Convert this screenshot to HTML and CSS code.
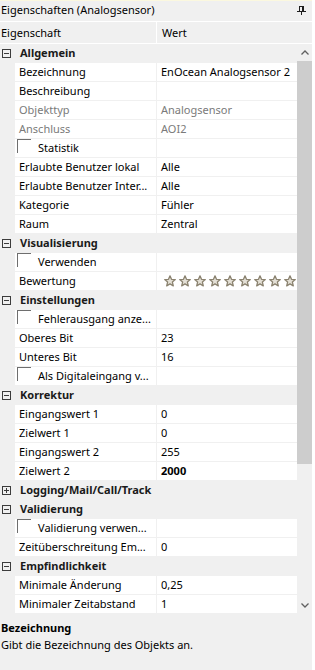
FILE: index.html
```html
<!DOCTYPE html>
<html lang="de">
<head>
<meta charset="utf-8">
<title>Eigenschaften</title>
<link rel="stylesheet" href="styles.css">
</head>
<body>
<div class="panel">
  <div class="titlebar">
    <span class="title">Eigenschaften (Analogsensor)</span>
    <svg class="pin" width="9" height="9" viewBox="0 0 9 9"><rect x="2" y="0" width="5" height="1"/><rect x="2" y="1" width="1" height="4"/><rect x="5" y="1" width="2" height="4"/><rect x="0" y="5" width="9" height="1"/><rect x="4" y="6" width="1" height="3"/></svg>
  </div>
  <div class="header">
    <div class="hname">Eigenschaft</div>
    <div class="hval">Wert</div>
  </div>
  <div class="body">
    <div class="grid">
      <div class="row cat"><span class="exp minus"></span><span class="catlabel">Allgemein</span></div>
      <div class="row"><span class="gutter"></span><span class="name">Bezeichnung</span><span class="val">EnOcean Analogsensor 2</span></div>
      <div class="row"><span class="gutter"></span><span class="name">Beschreibung</span><span class="val"></span></div>
      <div class="row dis"><span class="gutter"></span><span class="name">Objekttyp</span><span class="val">Analogsensor</span></div>
      <div class="row dis"><span class="gutter"></span><span class="name">Anschluss</span><span class="val">AOI2</span></div>
      <div class="row"><span class="gutter"></span><span class="name chk"><span class="box"></span>Statistik</span><span class="val"></span></div>
      <div class="row"><span class="gutter"></span><span class="name">Erlaubte Benutzer lokal</span><span class="val">Alle</span></div>
      <div class="row"><span class="gutter"></span><span class="name">Erlaubte Benutzer Inter...</span><span class="val">Alle</span></div>
      <div class="row"><span class="gutter"></span><span class="name">Kategorie</span><span class="val">Fühler</span></div>
      <div class="row"><span class="gutter"></span><span class="name">Raum</span><span class="val">Zentral</span></div>
      <div class="row cat"><span class="exp minus"></span><span class="catlabel">Visualisierung</span></div>
      <div class="row"><span class="gutter"></span><span class="name chk"><span class="box"></span>Verwenden</span><span class="val"></span></div>
      <div class="row"><span class="gutter"></span><span class="name">Bewertung</span><span class="val stars">
        <svg class="star" viewBox="0 0 12 12"><path d="M6 0.8 7.5 4.3 11.3 4.6 8.4 7.1 9.3 10.9 6 8.9 2.7 10.9 3.6 7.1 0.7 4.6 4.5 4.3Z"/></svg>
        <svg class="star" viewBox="0 0 12 12"><path d="M6 0.8 7.5 4.3 11.3 4.6 8.4 7.1 9.3 10.9 6 8.9 2.7 10.9 3.6 7.1 0.7 4.6 4.5 4.3Z"/></svg>
        <svg class="star" viewBox="0 0 12 12"><path d="M6 0.8 7.5 4.3 11.3 4.6 8.4 7.1 9.3 10.9 6 8.9 2.7 10.9 3.6 7.1 0.7 4.6 4.5 4.3Z"/></svg>
        <svg class="star" viewBox="0 0 12 12"><path d="M6 0.8 7.5 4.3 11.3 4.6 8.4 7.1 9.3 10.9 6 8.9 2.7 10.9 3.6 7.1 0.7 4.6 4.5 4.3Z"/></svg>
        <svg class="star" viewBox="0 0 12 12"><path d="M6 0.8 7.5 4.3 11.3 4.6 8.4 7.1 9.3 10.9 6 8.9 2.7 10.9 3.6 7.1 0.7 4.6 4.5 4.3Z"/></svg>
        <svg class="star" viewBox="0 0 12 12"><path d="M6 0.8 7.5 4.3 11.3 4.6 8.4 7.1 9.3 10.9 6 8.9 2.7 10.9 3.6 7.1 0.7 4.6 4.5 4.3Z"/></svg>
        <svg class="star" viewBox="0 0 12 12"><path d="M6 0.8 7.5 4.3 11.3 4.6 8.4 7.1 9.3 10.9 6 8.9 2.7 10.9 3.6 7.1 0.7 4.6 4.5 4.3Z"/></svg>
        <svg class="star" viewBox="0 0 12 12"><path d="M6 0.8 7.5 4.3 11.3 4.6 8.4 7.1 9.3 10.9 6 8.9 2.7 10.9 3.6 7.1 0.7 4.6 4.5 4.3Z"/></svg>
        <svg class="star" viewBox="0 0 12 12"><path d="M6 0.8 7.5 4.3 11.3 4.6 8.4 7.1 9.3 10.9 6 8.9 2.7 10.9 3.6 7.1 0.7 4.6 4.5 4.3Z"/></svg>
      </span></div>
      <div class="row cat"><span class="exp minus"></span><span class="catlabel">Einstellungen</span></div>
      <div class="row"><span class="gutter"></span><span class="name chk"><span class="box"></span>Fehlerausgang anze...</span><span class="val"></span></div>
      <div class="row"><span class="gutter"></span><span class="name">Oberes Bit</span><span class="val">23</span></div>
      <div class="row"><span class="gutter"></span><span class="name">Unteres Bit</span><span class="val">16</span></div>
      <div class="row"><span class="gutter"></span><span class="name chk"><span class="box"></span>Als Digitaleingang v...</span><span class="val"></span></div>
      <div class="row cat"><span class="exp minus"></span><span class="catlabel">Korrektur</span></div>
      <div class="row"><span class="gutter"></span><span class="name">Eingangswert 1</span><span class="val">0</span></div>
      <div class="row"><span class="gutter"></span><span class="name">Zielwert 1</span><span class="val">0</span></div>
      <div class="row"><span class="gutter"></span><span class="name">Eingangswert 2</span><span class="val">255</span></div>
      <div class="row"><span class="gutter"></span><span class="name">Zielwert 2</span><span class="val bold">2000</span></div>
      <div class="row cat"><span class="exp plus"></span><span class="catlabel">Logging/Mail/Call/Track</span></div>
      <div class="row cat"><span class="exp minus"></span><span class="catlabel">Validierung</span></div>
      <div class="row"><span class="gutter"></span><span class="name chk"><span class="box"></span>Validierung verwen...</span><span class="val"></span></div>
      <div class="row"><span class="gutter"></span><span class="name">Zeitüberschreitung Em...</span><span class="val">0</span></div>
      <div class="row cat"><span class="exp minus"></span><span class="catlabel">Empfindlichkeit</span></div>
      <div class="row"><span class="gutter"></span><span class="name">Minimale Änderung</span><span class="val">0,25</span></div>
      <div class="row"><span class="gutter"></span><span class="name">Minimaler Zeitabstand</span><span class="val">1</span></div>
    </div>
    <div class="scrollbar">
      <div class="arrow up"><svg width="8" height="5" viewBox="0 0 8 5"><path d="M0.5 4.5 4 1 7.5 4.5"/></svg></div>
      <div class="track"><div class="thumb"></div></div>
      <div class="arrow down"><svg width="8" height="5" viewBox="0 0 8 5"><path d="M0.5 0.5 4 4 7.5 0.5"/></svg></div>
    </div>
  </div>
  <div class="desc">
    <div class="desctitle">Bezeichnung</div>
    <div class="desctext">Gibt die Bezeichnung des Objekts an.</div>
  </div>
</div>
</body>
</html>
```

FILE: styles.css
```css
* { box-sizing: border-box; }

html, body {
  margin: 0;
  padding: 0;
  background: #ffffff;
}

body {
  font-family: "Noto Sans", "Open Sans", sans-serif;
  font-size: 11px;
  color: #000;
}

.panel {
  width: 312px;
  height: 670px;
  background: #f0f0f0;
  display: flex;
  flex-direction: column;
  overflow: hidden;
}

.titlebar {
  height: 21px;
  border-top: 1px solid #fbf8df;
  display: flex;
  align-items: center;
  justify-content: space-between;
  padding: 0 6px 2px 1px;
  line-height: 16px;
}

.pin { fill: #1e1e1e; }

.header {
  height: 23px;
  border-top: 1px solid #ffffff;
  border-bottom: 1px solid #ffffff;
  display: flex;
  line-height: 21px;
}

.hname {
  width: 157px;
  border-right: 1px solid #ffffff;
  padding-left: 1px;
}

.hval {
  flex: 1;
  padding-left: 5px;
}

.body {
  height: 570px;
  display: flex;
}

.grid {
  width: 297px;
  display: flex;
  flex-direction: column;
}

.row {
  height: 19px;
  display: flex;
  flex: none;
  line-height: 18px;
}

.gutter {
  width: 15px;
  flex: none;
}

.name {
  width: 142px;
  flex: none;
  background: #fff;
  border-right: 1px solid #f0f0f0;
  border-bottom: 1px solid #f0f0f0;
  padding-left: 4px;
  white-space: nowrap;
  overflow: hidden;
}

.val {
  width: 140px;
  flex: none;
  background: #fff;
  border-bottom: 1px solid #f0f0f0;
  padding-left: 4px;
  white-space: nowrap;
  overflow: hidden;
}

.bold { font-weight: 700; }

.dis .name, .dis .val { color: #7a7a7a; }

.chk {
  display: flex;
  padding-left: 2px;
}

.box {
  width: 14px;
  height: 14px;
  border-top: 1px solid #6e6e6e;
  border-left: 1px solid #6e6e6e;
  margin-right: 7px;
  flex: none;
}

.cat {
  align-items: center;
  padding-bottom: 1px;
}

.exp {
  width: 9px;
  height: 9px;
  margin: 0 9px 0 2px;
  border: 1px solid #3c3c3c;
  position: relative;
  flex: none;
}

.exp::before {
  content: "";
  position: absolute;
  left: 1px;
  top: 3px;
  width: 5px;
  height: 1px;
  background: #3c3c3c;
}

.plus::after {
  content: "";
  position: absolute;
  left: 3px;
  top: 1px;
  width: 1px;
  height: 5px;
  background: #3c3c3c;
}

.catlabel {
  font-weight: 700;
  color: #1a1a1a;
}

.stars {
  display: flex;
  align-items: center;
  gap: 3px;
  padding-left: 7px;
}

.star {
  width: 12px;
  height: 12px;
  flex: none;
}

.star path {
  fill: #e4e0d6;
  stroke: #8a826f;
  stroke-width: 1.3;
  stroke-linejoin: round;
}

.scrollbar {
  width: 15px;
  display: flex;
  flex-direction: column;
  background: #f0f0f0;
}

.arrow {
  height: 17px;
  display: flex;
  align-items: center;
  justify-content: center;
  flex: none;
}

.arrow path {
  fill: none;
  stroke: #606060;
  stroke-width: 1.3;
}

.track {
  flex: 1;
}

.thumb {
  height: 403px;
  background: #cdcdcd;
}

.desc {
  flex: 1;
  padding: 5px 1px 0 1px;
  line-height: 17px;
}

.desctitle { font-weight: 700; }
```
